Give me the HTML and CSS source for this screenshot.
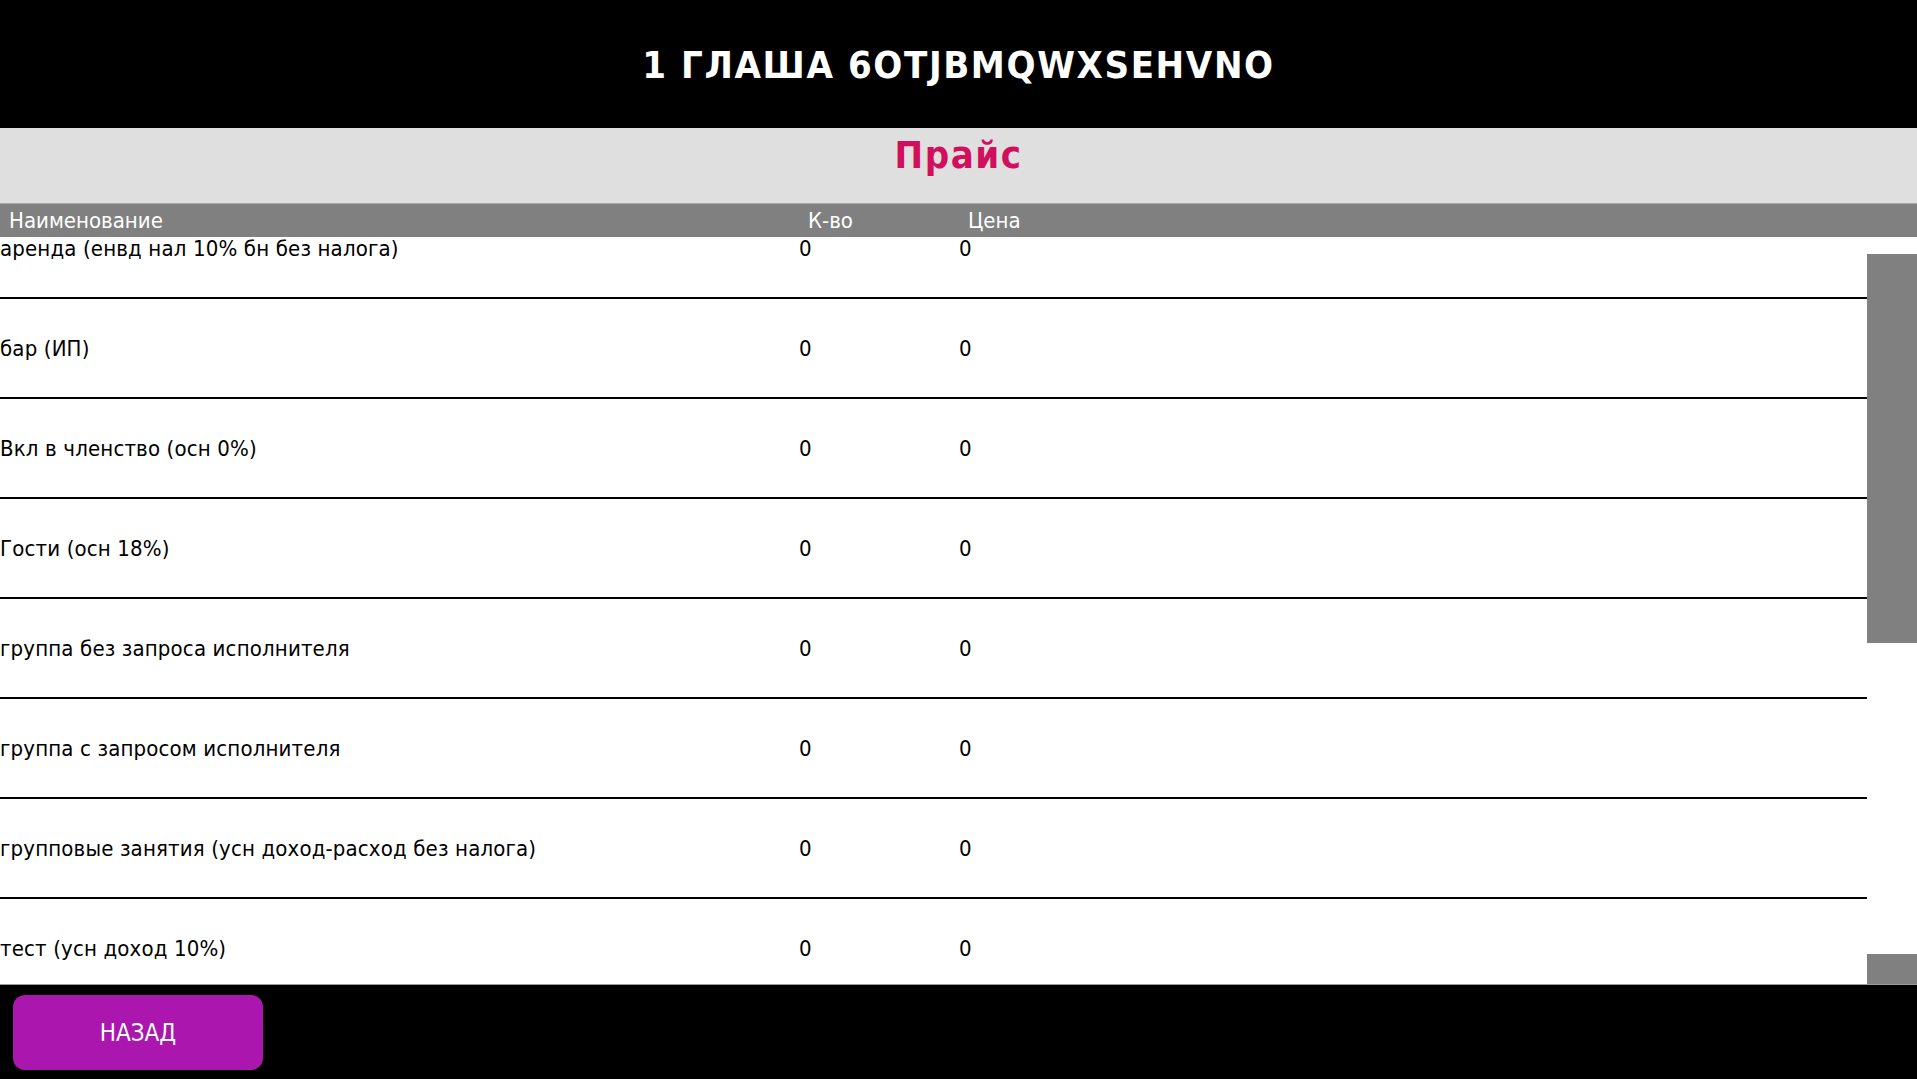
FILE: index.html
```html
<!DOCTYPE html>
<html lang="ru">
<head>
<meta charset="utf-8">
<title>Прайс</title>
<link rel="stylesheet" href="styles.css">
</head>
<body>
<div class="screen">
  <header class="topbar">
    <h1 class="topbar-title">1 ГЛАША 6OTJBMQWXSEHVNO</h1>
  </header>
  <div class="section-bar">
    <h2 class="section-title">Прайс</h2>
  </div>
  <div class="table-head">
    <div class="th">Наименование</div>
    <div class="th">К-во</div>
    <div class="th">Цена</div>
  </div>
  <div class="list">
    <div class="list-body">
      <div class="row"><div class="cell">аренда (енвд нал 10% бн без налога)</div><div class="cell">0</div><div class="cell">0</div></div>
      <div class="row"><div class="cell">бар (ИП)</div><div class="cell">0</div><div class="cell">0</div></div>
      <div class="row"><div class="cell">Вкл в членство (осн 0%)</div><div class="cell">0</div><div class="cell">0</div></div>
      <div class="row"><div class="cell">Гости (осн 18%)</div><div class="cell">0</div><div class="cell">0</div></div>
      <div class="row"><div class="cell">группа без запроса исполнителя</div><div class="cell">0</div><div class="cell">0</div></div>
      <div class="row"><div class="cell">группа с запросом исполнителя</div><div class="cell">0</div><div class="cell">0</div></div>
      <div class="row"><div class="cell">групповые занятия (усн доход-расход без налога)</div><div class="cell">0</div><div class="cell">0</div></div>
      <div class="row"><div class="cell">тест (усн доход 10%)</div><div class="cell">0</div><div class="cell">0</div></div>
    </div>
    <div class="rail" aria-hidden="true">
      <div class="rail-top"></div>
      <div class="rail-thumb"></div>
      <div class="rail-track"></div>
      <div class="rail-end"></div>
    </div>
  </div>
  <footer class="footer">
    <button class="btn-back" type="button">НАЗАД</button>
  </footer>
</div>
</body>
</html>
```
FILE: styles.css
```css
html, body {
  margin: 0;
  padding: 0;
  height: 100%;
  overflow: hidden;
  background: #fff;
}

body {
  font-family: "DejaVu Sans Condensed", "DejaVu Sans", sans-serif;
  font-stretch: condensed;
  color: #000;
}

.screen {
  display: flex;
  flex-direction: column;
  height: 1079px;
}

/* top black title bar */
.topbar {
  height: 128px;
  background: #000;
  display: flex;
  align-items: center;
  justify-content: center;
  flex: none;
}

.topbar-title {
  margin: 0;
  padding-top: 2px;
  color: #fff;
  font-size: 38px;
  font-weight: bold;
  letter-spacing: 1.6px;
  line-height: 1;
}

/* light grey band with the section name */
.section-bar {
  height: 75px;
  background: #dfdfdf;
  flex: none;
  display: flex;
  justify-content: center;
}

.section-title {
  margin: 0;
  padding-top: 6px;
  color: #d0105c;
  font-size: 38px;
  font-weight: bold;
  letter-spacing: 1.5px;
  line-height: 42px;
}

/* column headers */
.table-head {
  flex: none;
  height: 33px;
  border-top: 1px solid #a8a8a8;
  background: #808080;
  display: grid;
  grid-template-columns: 799px 160px 1fr;
  align-items: center;
}

.th {
  padding-left: 9px;
  color: #fff;
  font-size: 22px;
  line-height: 24px;
}

/* list of price rows with its scroll rail */
.list {
  flex: 1;
  min-height: 0;
  display: flex;
  background: #fff;
}

.list-body {
  flex: 1;
  min-width: 0;
  overflow: hidden;
}

.row {
  display: grid;
  grid-template-columns: 799px 160px 1fr;
  font-size: 22px;
  letter-spacing: 0.15px;
  line-height: 24px;
  padding-bottom: 36px;
  border-bottom: 2px solid #000;
  margin-bottom: 38px;
}

.cell {
  white-space: nowrap;
}

.rail {
  flex: none;
  width: 50px;
  display: flex;
  flex-direction: column;
  background: #fff;
}

.rail-top {
  height: 17px;
}

.rail-thumb {
  height: 389px;
  background: #808080;
}

.rail-track {
  flex: 1;
}

.rail-end {
  height: 30px;
  background: #808080;
}

/* bottom bar with the back button */
.footer {
  flex: none;
  height: 95px;
  border-top: 1px solid #9a9a9a;
  background: #000;
  padding: 10px 0 0 13px;
  box-sizing: border-box;
}

.btn-back {
  width: 250px;
  height: 75px;
  border: none;
  border-radius: 12px;
  background: #aa16ae;
  color: #fff;
  font-family: inherit;
  font-size: 24px;
  cursor: pointer;
}
```
